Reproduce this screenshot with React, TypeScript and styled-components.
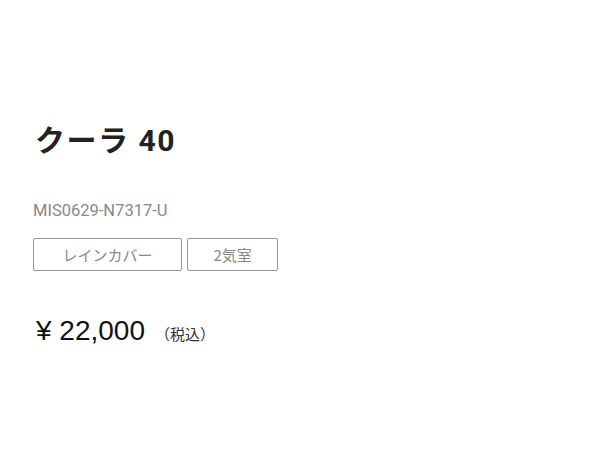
import styled, { createGlobalStyle } from 'styled-components';

const GlobalStyle = createGlobalStyle`
  body {
    margin: 0;
    background: #fff;
    font-family: "Noto Sans CJK JP", "Noto Sans", sans-serif;
  }
`;

const Page = styled.div`
  padding: 117px 0 0 35px;
`;

const Title = styled.h1`
  margin: 0;
  font-family: Roboto, "Noto Sans CJK JP", sans-serif;
  font-size: 30px;
  line-height: 48px;
  font-weight: 700;
  letter-spacing: 1.5px;
  color: #222;
`;

const Code = styled.div`
  margin: 34px 0 0 -2px;
  font-family: Roboto, "Noto Sans CJK JP", sans-serif;
  font-size: 16.5px;
  line-height: 24px;
  color: #888;
`;

const Tags = styled.div`
  display: flex;
  gap: 5px;
  margin: 15px 0 0 -2px;
`;

const Tag = styled.span<{ $pad: number }>`
  display: flex;
  align-items: center;
  justify-content: center;
  height: 33px;
  padding: 0 ${(p) => p.$pad}px;
  box-sizing: border-box;
  border: 1px solid #999;
  border-radius: 2px;
  font-size: 15px;
  color: #888;
`;

const Price = styled.div`
  display: flex;
  align-items: baseline;
  margin: 44px 0 0 1px;
  color: #111;
`;

const Amount = styled.span`
  font-family: "Liberation Sans", Arial, sans-serif;
  font-size: 28px;
`;

const Tax = styled.span`
  margin-left: 10px;
  font-size: 15px;
  color: #333;
`;

export default function App() {
  return (
    <>
      <GlobalStyle />
      <Page>
        <Title>クーラ 40</Title>
        <Code>MIS0629-N7317-U</Code>
        <Tags>
          <Tag $pad={28.5}>レインカバー</Tag>
          <Tag $pad={25.5}>2気室</Tag>
        </Tags>
        <Price>
          <Amount>¥ 22,000</Amount>
          <Tax>（税込）</Tax>
        </Price>
      </Page>
    </>
  );
}
